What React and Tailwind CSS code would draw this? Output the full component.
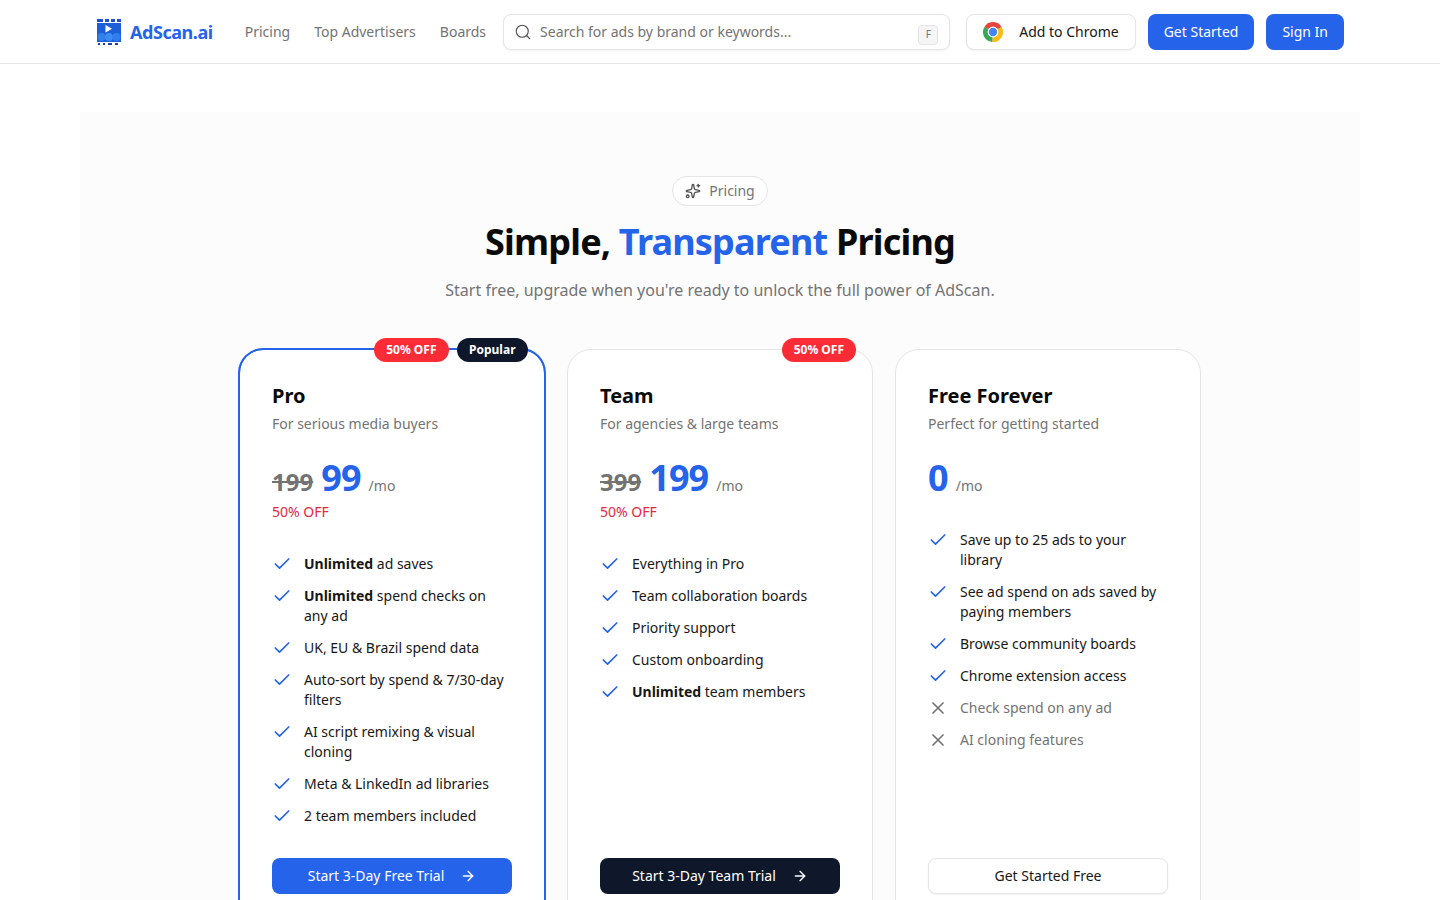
import React from "react";
import { Search, Sparkles, Check, X, ArrowRight } from "lucide-react";

function Logo() {
  return (
    <svg width="26" height="26" viewBox="0 0 26 26" className="shrink-0">
      <path d="M1 0h6v3H1zM9 0h4v3H9zM15 0h4v3h-4zM21 0h4v3h-4z" fill="#1d4ed8" />
      <rect x="1" y="4" width="24" height="19" fill="#1d5fd8" />
      <path d="M9.5 6v7.5l6.5-3.75z" fill="#fff" />
      <circle cx="5.5" cy="18" r="4" fill="#2f80ed" />
      <circle cx="13" cy="18" r="4" fill="#3b8cf2" />
      <circle cx="20.5" cy="18" r="4" fill="#2f80ed" />
      <path d="M2 24h2v2H2zM7 24h2v2H7zM12 24h4v2h-4zM19 24h3v2h-3z" fill="#1e40af" />
    </svg>
  );
}

function ChromeIcon() {
  return (
    <svg width="20" height="20" viewBox="0 0 48 48" className="shrink-0">
      <path d="M24 24L3.2 12A24 24 0 0 1 44.8 12z" fill="#e8453c" />
      <path d="M24 24L44.8 12A24 24 0 0 1 22 48z" fill="#f9bc15" />
      <path d="M24 24L22 48A24 24 0 0 1 3.2 12z" fill="#3aa757" />
      <circle cx="24" cy="24" r="13" fill="#fff" />
      <circle cx="24" cy="24" r="10" fill="#4285f4" />
    </svg>
  );
}

function Item({ children, off }) {
  return (
    <li className="flex items-start gap-3">
      {off ? (
        <X className="h-5 w-5 shrink-0 text-[#737373]" strokeWidth={2} />
      ) : (
        <Check className="h-5 w-5 shrink-0 text-[#2563eb]" strokeWidth={2} />
      )}
      <span className={off ? "text-[#737373]" : "text-[#171717]"}>{children}</span>
    </li>
  );
}

function Card({ name, desc, old, price, off, badges, featured, children, cta }) {
  return (
    <div
      className={
        "relative flex flex-col rounded-3xl bg-white p-8 " +
        (featured ? "border border-[#2563eb] outline-2 -outline-offset-1 outline-[#2563eb]" : "border border-[#e5e5e5]")
      }
    >
      {badges && <div className="absolute -top-[12px] right-4 flex gap-2">{badges}</div>}
      <h3 className="text-xl font-bold leading-7 text-[#0a0a0a]">{name}</h3>
      <p className="mt-1 text-sm leading-5 text-[#737373]">{desc}</p>
      <div className="mt-6 flex h-10 items-baseline">
        {old && <span className="mr-2 text-2xl font-bold text-[#737373] line-through">{old}</span>}
        <span className="text-4xl font-bold leading-10 tracking-tight text-[#2563eb]">{price}</span>
        <span className="ml-2 text-sm text-[#737373]">/mo</span>
      </div>
      {off && <p className="mt-1 h-5 text-sm leading-5 text-[#e7263f]">50% OFF</p>}
      <ul className="mt-8 flex flex-1 flex-col gap-3 text-sm leading-5">{children}</ul>
      <div className="mt-8">{cta}</div>
    </div>
  );
}

const redBadge = (
  <span className="rounded-full bg-[#fb2c36] px-3 py-1 text-xs font-bold leading-4 text-white">50% OFF</span>
);
const popBadge = (
  <span className="rounded-full bg-[#0f172a] px-[12.5px] py-1 text-xs font-bold leading-4 text-white">Popular</span>
);

export default function App() {
  return (
    <div className="min-h-screen bg-white font-['Noto_Sans',sans-serif]">
      <header className="border-b border-[#e5e5e5] bg-white">
        <div className="mx-auto flex h-[63px] max-w-[1280px] items-center px-4">
          <div className="flex items-center gap-2">
            <Logo />
            <span className="text-lg font-bold tracking-[-0.45px] text-[#2563eb]">AdScan.ai</span>
          </div>
          <nav className="ml-8 flex items-center gap-6 text-sm text-[#737373]">
            <span>Pricing</span>
            <span>Top Advertisers</span>
            <span>Boards</span>
          </nav>
          <div className="ml-[17px] flex h-9 flex-1 items-center rounded-lg border border-[#e5e5e5] bg-white pl-2.5 pr-[11px] shadow-xs">
            <Search className="h-[18px] w-[18px] text-[#525252]" strokeWidth={1.5} />
            <span className="ml-2 flex-1 text-sm text-[#737373]">Search for ads by brand or keywords...</span>
            <span className="mt-1.5 flex h-5 w-5 items-center justify-center rounded border border-[#e5e5e5] bg-[#f5f5f5] text-[10px] text-[#737373]">F</span>
          </div>
          <div className="ml-4 flex h-9 items-center gap-4 rounded-lg border border-[#e5e5e5] bg-white px-4 text-sm text-[#171717] shadow-xs">
            <ChromeIcon />
            <span>Add to Chrome</span>
          </div>
          <button className="ml-3 h-9 rounded-lg bg-[#2563eb] px-4 text-sm text-white">Get Started</button>
          <button className="ml-3 h-9 rounded-lg bg-[#2563eb] px-4 text-sm text-white">Sign In</button>
        </div>
      </header>
      <main className="mx-auto mt-12 max-w-[1280px] bg-[#fcfcfc] px-[159px] pb-16 pt-16">
        <div className="flex flex-col items-center">
          <div className="flex h-[30px] items-center gap-2 rounded-full border border-[#e5e5e5] bg-white px-3 text-sm text-[#737373]">
            <Sparkles className="h-4 w-4 text-[#525252]" strokeWidth={2} />
            <span>Pricing</span>
          </div>
          <h1 className="mt-4 text-4xl font-bold leading-10 tracking-[-0.82px] text-[#0a0a0a]">
            Simple, <span className="text-[#2563eb]">Transparent</span> Pricing
          </h1>
          <p className="mt-4 text-base leading-6 text-[#737373]">
            Start free, upgrade when you're ready to unlock the full power of AdScan.
          </p>
        </div>
        <div className="mt-[47px] grid grid-cols-3 gap-[22px]">
          <Card
            name="Pro"
            desc="For serious media buyers"
            old="199"
            price="99"
            off
            featured
            badges={<>{redBadge}{popBadge}</>}
            cta={
              <button className="flex h-9 w-full items-center justify-center gap-4 rounded-lg bg-[#2563eb] text-sm text-white">
                Start 3-Day Free Trial <ArrowRight className="h-4 w-4" strokeWidth={2} />
              </button>
            }
          >
            <Item><b className="font-bold">Unlimited</b> ad saves</Item>
            <Item><b className="font-bold">Unlimited</b> spend checks on any ad</Item>
            <Item>UK, EU &amp; Brazil spend data</Item>
            <Item>Auto-sort by spend &amp; 7/30-day filters</Item>
            <Item>AI script remixing &amp; visual cloning</Item>
            <Item>Meta &amp; LinkedIn ad libraries</Item>
            <Item>2 team members included</Item>
          </Card>
          <Card
            name="Team"
            desc="For agencies & large teams"
            old="399"
            price="199"
            off
            badges={redBadge}
            cta={
              <button className="flex h-9 w-full items-center justify-center gap-4 rounded-lg bg-[#0f172a] text-sm text-white">
                Start 3-Day Team Trial <ArrowRight className="h-4 w-4" strokeWidth={2} />
              </button>
            }
          >
            <Item>Everything in Pro</Item>
            <Item>Team collaboration boards</Item>
            <Item>Priority support</Item>
            <Item>Custom onboarding</Item>
            <Item><b className="font-bold">Unlimited</b> team members</Item>
          </Card>
          <Card
            name="Free Forever"
            desc="Perfect for getting started"
            price="0"
            cta={
              <button className="flex h-9 w-full items-center justify-center rounded-lg border border-[#e5e5e5] bg-white text-sm text-[#171717] shadow-xs">
                Get Started Free
              </button>
            }
          >
            <Item>Save up to 25 ads to your library</Item>
            <Item>See ad spend on ads saved by paying members</Item>
            <Item>Browse community boards</Item>
            <Item>Chrome extension access</Item>
            <Item off>Check spend on any ad</Item>
            <Item off>AI cloning features</Item>
          </Card>
        </div>
      </main>
    </div>
  );
}
